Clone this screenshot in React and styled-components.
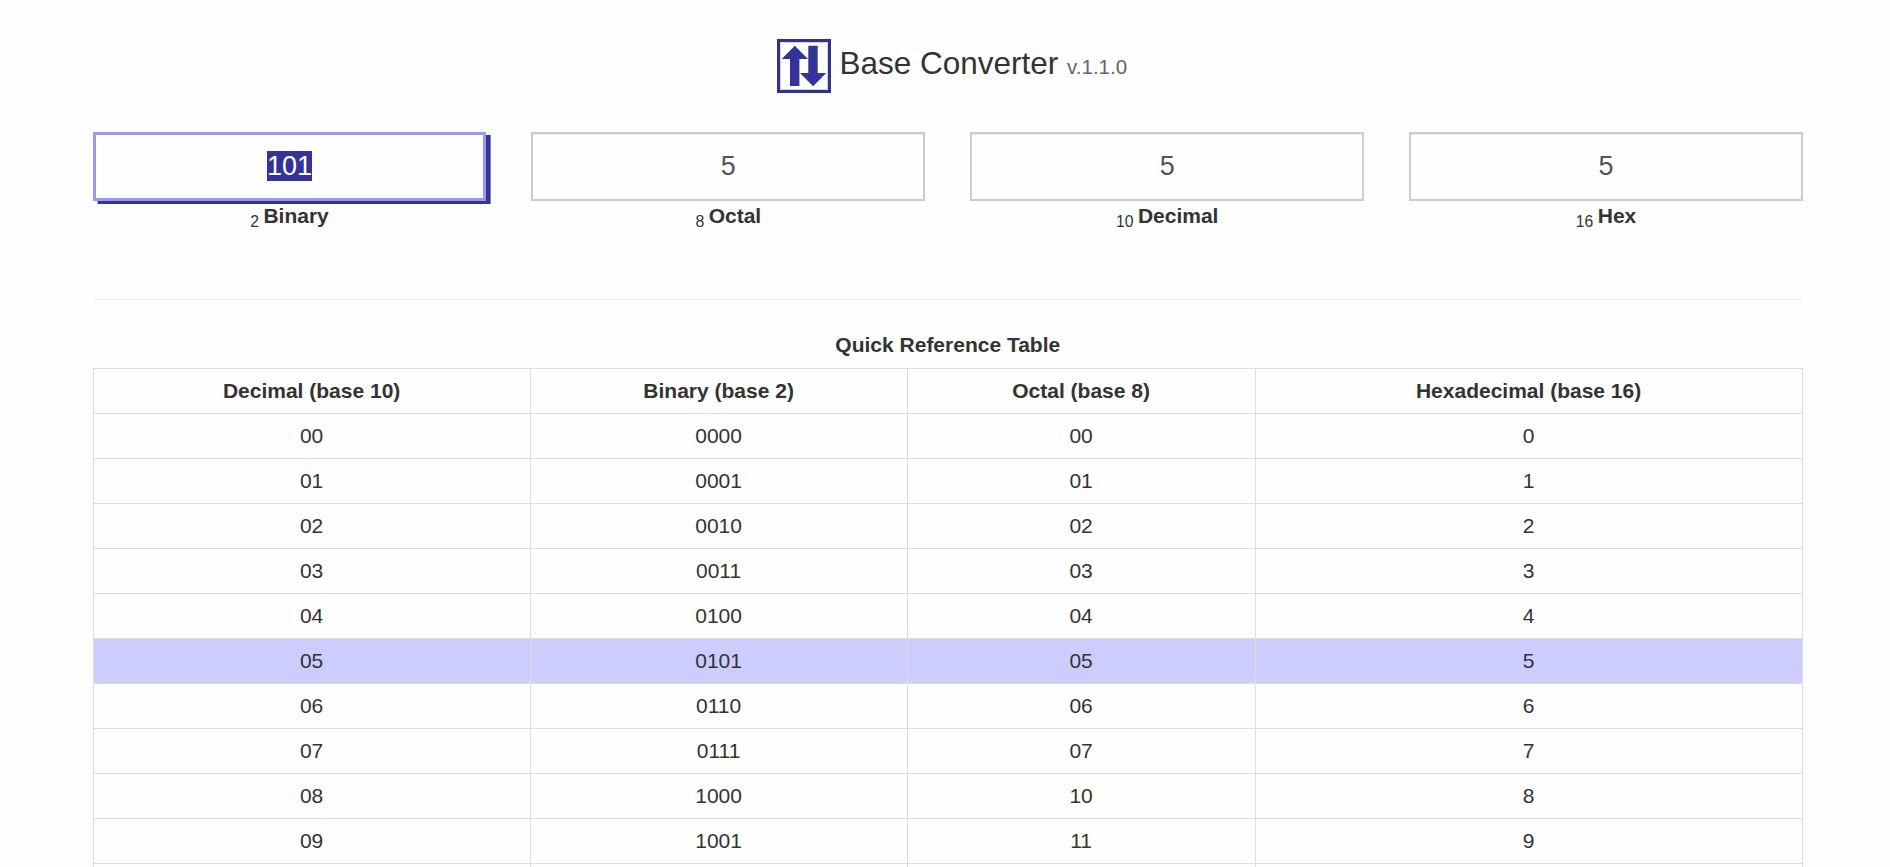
import React from "react";
import styled, { createGlobalStyle, css } from "styled-components";

const GlobalStyle = createGlobalStyle`
  *, *::before, *::after { box-sizing: border-box; }
  html, body { margin: 0; height: 100%; overflow: hidden; background: #fefefe; }
  body {
    color: #333;
    font-family: "Liberation Sans", Arial, sans-serif;
    font-size: 21px;
    line-height: 28px;
  }
`;

const Page = styled.main`
  width: 1710.4px;
  height: 867px;
  margin-left: 92.6px;
  overflow: visible;
`;

const Header = styled.header`
  display: flex;
  justify-content: center;
  align-items: flex-start;
  gap: 8px;
  height: 132px;
  padding: 39px 0 0 9px;
`;

const Logo = styled.svg`
  display: block;
  width: 54px;
  height: 54px;
`;

const Title = styled.h1`
  margin: 0;
  padding-top: 4px;
  font-size: 31.5px;
  font-weight: 400;
  line-height: 40px;
  white-space: nowrap;
`;

const Version = styled.small`
  color: #666;
  font-size: 20.5px;
`;

const Converters = styled.section`
  display: grid;
  grid-template-columns: repeat(4, 1fr);
  column-gap: 45px;
  height: 167px;
`;

const Converter = styled.div`
  text-align: center;
`;

const Field = styled.div`
  display: flex;
  align-items: center;
  justify-content: center;
  height: 69px;
  padding-bottom: 2px;
  border: 2px solid #ccc;
  background: #fefefe;
  box-shadow: inset 0 1px 1px rgba(0, 0, 0, 0.075);
  color: #555;
  font-size: 27px;
  line-height: 30px;
  ${({ $active }) =>
    $active &&
    css`
      border: 3px solid #9999ee;
      box-shadow: 4.6px 3px 0 #333399;
    `}
`;

const Value = styled.span`
  display: block;
  ${({ $selected }) =>
    $selected &&
    css`
      background: #333399;
      color: #fff;
    `}
`;

const Label = styled.div`
  padding-top: 1px;
  font-weight: 700;
  line-height: 28px;
`;

const Base = styled.sub`
  font-size: 15.75px;
  font-weight: 400;
  line-height: 0;
  vertical-align: baseline;
  position: relative;
  bottom: -4px;
`;

const Divider = styled.hr`
  height: 1px;
  margin: 0;
  border: 0;
  background: #eee;
`;

const Caption = styled.h2`
  margin: 0;
  padding-top: 31px;
  height: 68px;
  font-size: 21px;
  line-height: 28px;
  text-align: center;
`;

const Table = styled.table`
  width: 1710px;
  table-layout: fixed;
  border-collapse: collapse;
  text-align: center;
`;

const Row = styled.tr`
  height: 45px;
  background: ${({ $current }) => ($current ? "#ccccff" : "transparent")};
`;

const Cell = styled.td`
  padding: 8px;
  border: 1px solid #ddd;
  line-height: 28px;
`;

const COLUMNS = [
  { title: "Decimal (base 10)", width: 437 },
  { title: "Binary (base 2)", width: 377 },
  { title: "Octal (base 8)", width: 348 },
  { title: "Hexadecimal (base 16)", width: 547 },
];

const FIELDS = [
  { base: 2, name: "Binary", value: "101", active: true },
  { base: 8, name: "Octal", value: "5" },
  { base: 10, name: "Decimal", value: "5" },
  { base: 16, name: "Hex", value: "5" },
];

const CURRENT = 5;

const rows = Array.from({ length: 10 }, (_, n) => [
  String(n).padStart(2, "0"),
  n.toString(2).padStart(4, "0"),
  n.toString(8).padStart(2, "0"),
  n.toString(16).toUpperCase(),
]);

export default function App() {
  return (
    <>
      <GlobalStyle />
      <Page>
        <Header>
          <Logo viewBox="0 0 54 54" aria-hidden="true">
            <rect width="54" height="54" fill="#333388" />
            <rect x="3" y="3" width="48" height="48" fill="#ccccff" />
            <rect x="4" y="4" width="46" height="46" fill="#fff" />
            <path
              fill="#333399"
              d="M17.8 6.7L31 20H22.4V47H13V20H4.7ZM31.3 6.7H40.7V34H49.2L36.1 47.2L23 34H31.3Z"
            />
          </Logo>
          <Title>
            Base Converter <Version>v.1.1.0</Version>
          </Title>
        </Header>
        <Converters>
          {FIELDS.map((f) => (
            <Converter key={f.base}>
              <Field $active={f.active}>
                <Value $selected={f.active}>{f.value}</Value>
              </Field>
              <Label>
                <Base>{f.base} </Base>
                {f.name}
              </Label>
            </Converter>
          ))}
        </Converters>
        <Divider />
        <Caption>Quick Reference Table</Caption>
        <Table>
          <colgroup>
            {COLUMNS.map((c) => (
              <col key={c.title} width={c.width} />
            ))}
          </colgroup>
          <thead>
            <Row>
              {COLUMNS.map((c) => (
                <Cell as="th" key={c.title}>
                  {c.title}
                </Cell>
              ))}
            </Row>
          </thead>
          <tbody>
            {rows.map((cells, n) => (
              <Row key={n} $current={n === CURRENT}>
                {cells.map((text, i) => (
                  <Cell key={i}>{text}</Cell>
                ))}
              </Row>
            ))}
            <Row>
              {COLUMNS.map((c) => (
                <Cell key={c.title} />
              ))}
            </Row>
          </tbody>
        </Table>
      </Page>
    </>
  );
}
